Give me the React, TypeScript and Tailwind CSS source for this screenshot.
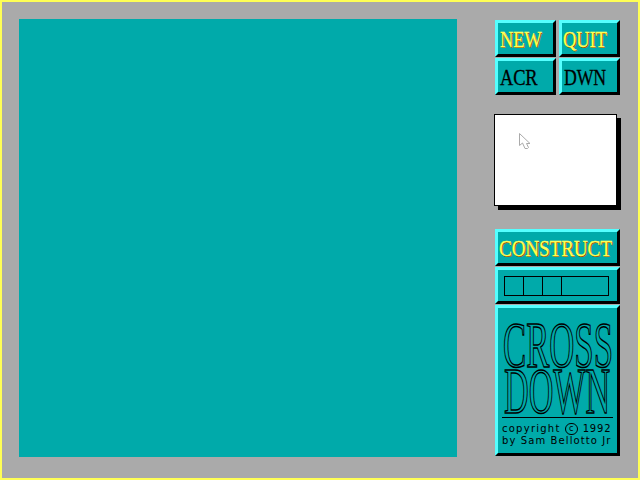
import React from 'react'

function Bevel({ className = '', children }: { className?: string; children?: React.ReactNode }) {
  return (
    <div className={`box-border border-[3px] border-t-[#55ffff] border-l-[#55ffff] border-r-black border-b-black bg-[#00aaaa] flex items-center overflow-hidden ${className}`}>
      {children}
    </div>
  )
}

const label = 'block text-[24px] leading-none whitespace-nowrap origin-left tracking-[-0.2px]'
const yellowText = 'text-[#ffff55] [-webkit-text-stroke:0.3px_#ffff55] [text-shadow:1.3px_0.5px_0_#aa5500]'
const blackText = 'text-black [-webkit-text-stroke:0.3px_#000]'
const hollow = 'text-[#00aaaa] [-webkit-text-stroke:1.5px_#000]'

export default function App() {
  return (
    <div className="box-border w-[640px] h-[480px] border-2 border-[#ffff55] bg-[#aaaaaa] flex font-['Liberation_Serif',serif] overflow-hidden">
      {/* Board */}
      <div className="w-[438px] h-[438px] ml-[17px] mt-[17px] bg-[#00aaaa] shrink-0" />

      {/* Side column */}
      <div className="ml-[38px] mt-[18px] w-[125px] flex flex-col">
        <div className="grid grid-cols-[61px_61px] gap-x-[3px] gap-y-px">
          <Bevel className="h-[37px] pl-[2px]">
            <span className={`${label} scale-x-[.77] ${yellowText}`}>NEW</span>
          </Bevel>
          <Bevel className="h-[37px] pl-px">
            <span className={`${label} scale-x-[.77] ${yellowText}`}>QUIT</span>
          </Bevel>
          <Bevel className="h-[37px] pl-[2px]">
            <span className={`${label} scale-x-[.77] ${blackText}`}>ACR</span>
          </Bevel>
          <Bevel className="h-[37px] pl-[2px]">
            <span className={`${label} scale-x-[.74] ${blackText}`}>DWN</span>
          </Bevel>
        </div>

        {/* Preview */}
        <div className="relative box-border w-[123px] h-[92px] -ml-px mt-[19px] bg-white border border-black shadow-[4px_4px_0_#000]">
          <svg className="absolute left-[24px] top-[18px]" width="12" height="17" viewBox="0 0 12 17" fill="none" stroke="#aaaaaa" strokeWidth="1">
            <path d="M.5.5V12.5L3.5 10L6 15.5H8.5L9.5 14.5L7.5 10.5H11L.5.5Z" />
          </svg>
        </div>

        <Bevel className="h-[37px] mt-[23px] pl-px">
          <span className={`${label} scale-x-[.8] ${yellowText}`}>CONSTRUCT</span>
        </Bevel>

        {/* Gauge */}
        <Bevel className="h-[37px] mt-px pl-[6px]">
          <div className="box-border w-[105px] h-[20px] border border-black grid grid-cols-[19px_19px_19px_1fr]">
            <div className="border-r border-black" />
            <div className="border-r border-black" />
            <div className="border-r border-black" />
            <div />
          </div>
        </Bevel>

        {/* Logo */}
        <Bevel className="h-[151px] mt-px !block">
          <div className="h-[109px] flex flex-col items-center pt-[14px]">
            <div className={`text-[65px] leading-[46px] h-[46px] scale-x-[.534] whitespace-nowrap ${hollow}`}>CROSS</div>
            <div className={`text-[65px] leading-[46px] h-[46px] scale-x-[.525] whitespace-nowrap ${hollow}`}>DOWN</div>
          </div>
          <div className="mx-[4px] border-t border-black font-['DejaVu_Sans',sans-serif] text-[10px] leading-[12px] text-black pt-[5px] whitespace-nowrap">
            <div className="tracking-[1.25px] flex items-center">
              copyright
              <span className="inline-flex items-center justify-center w-[13px] h-[12px] ml-[4px] mr-[5px] rounded-full border border-black text-[8px] leading-none tracking-normal">c</span>
              <span className="tracking-[.8px]">1992</span>
            </div>
            <div className="tracking-[1.1px]">by Sam Bellotto Jr</div>
          </div>
        </Bevel>
      </div>
    </div>
  )
}
